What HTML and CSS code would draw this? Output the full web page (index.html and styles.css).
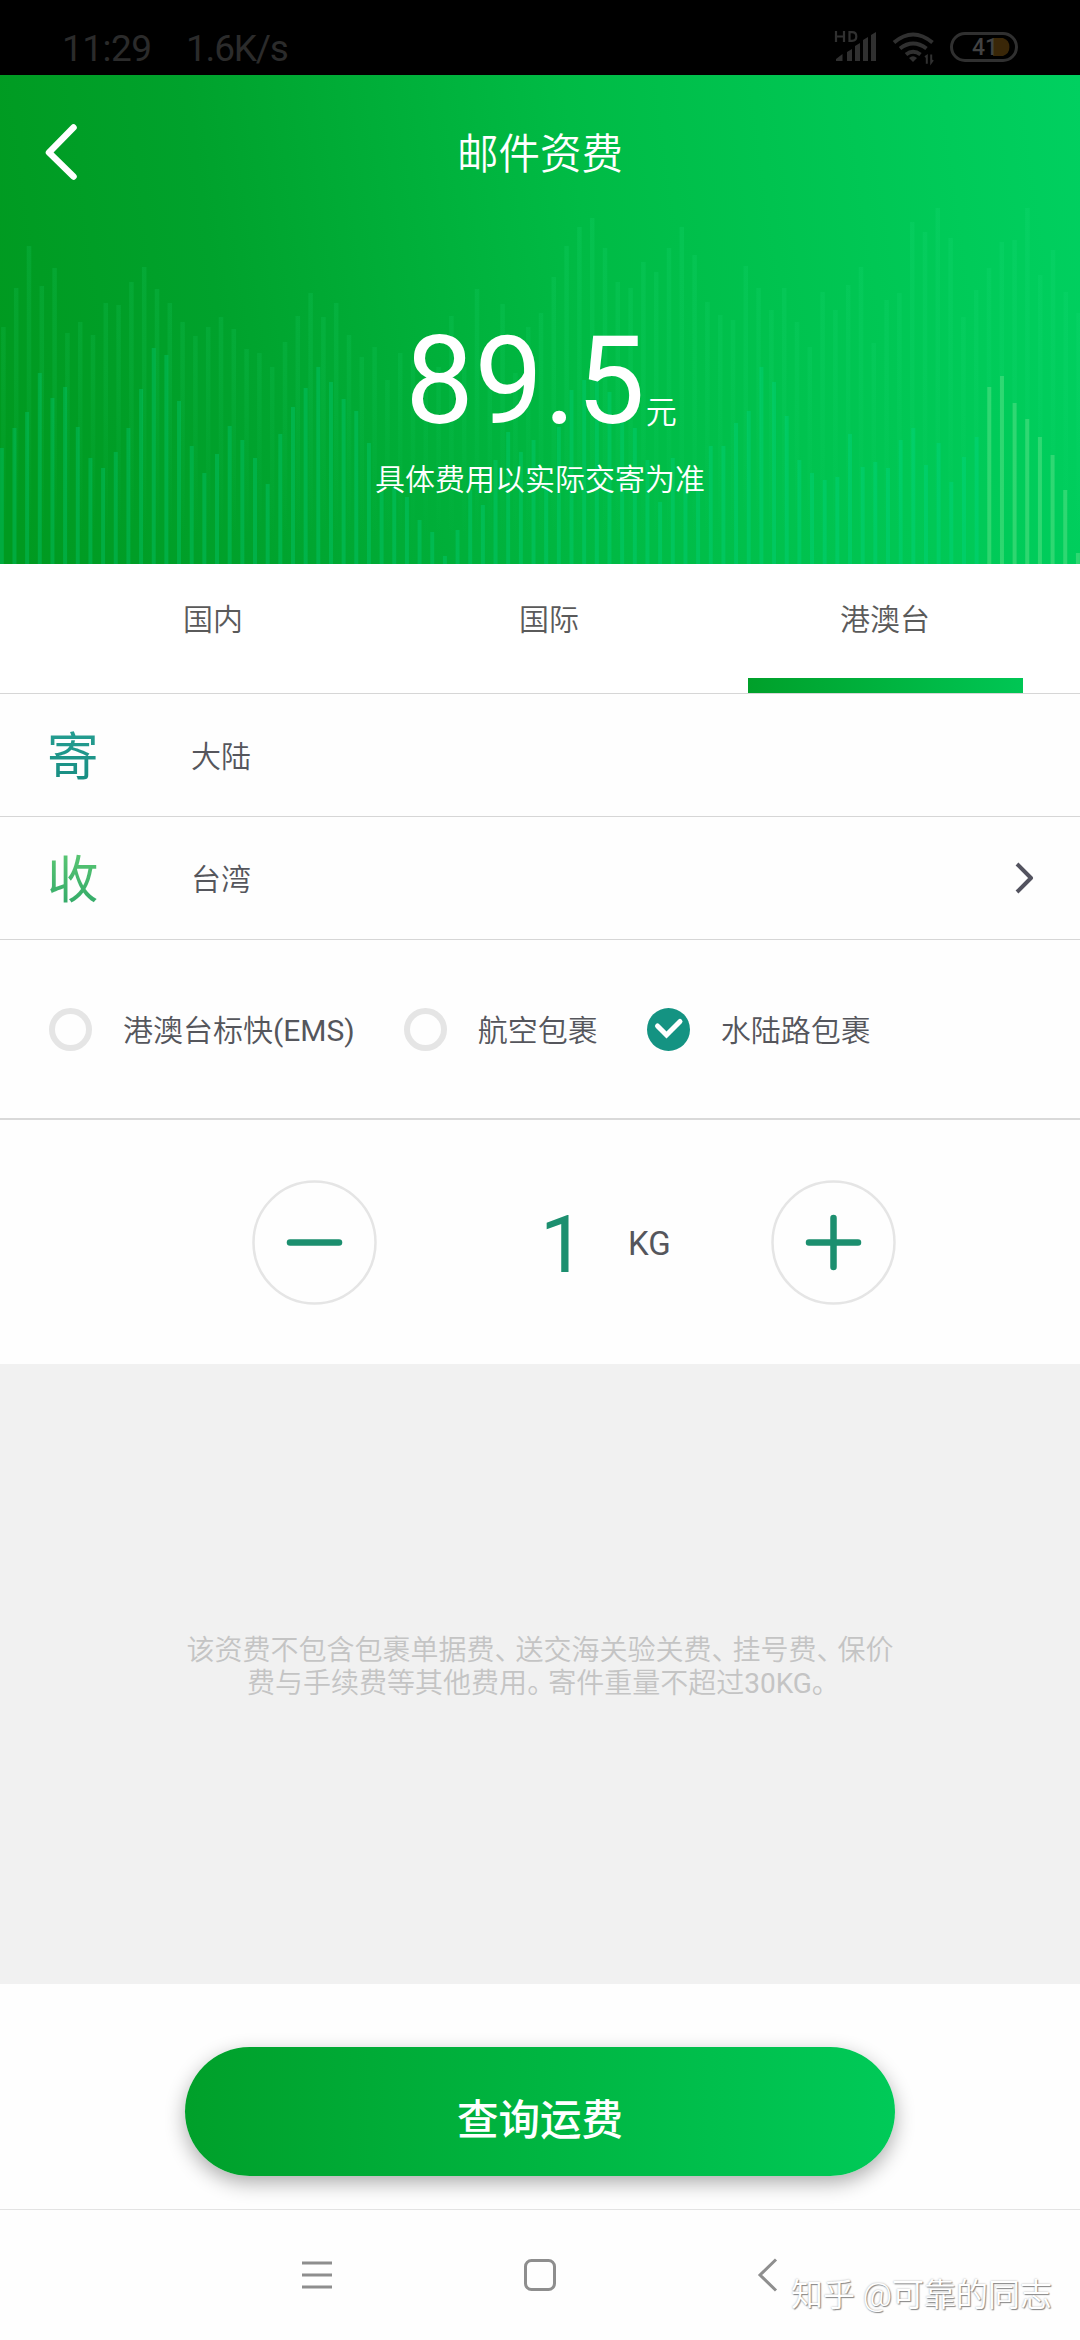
FILE: index.html
```html
<!DOCTYPE html>
<html lang="zh-CN">
<head>
<meta charset="utf-8">
<title>邮件资费</title>
<link rel="stylesheet" href="styles.css">
</head>
<body>
<div class="statusbar">
  <span class="clock">11:29</span>
  <span class="speed">1.6K/s</span>
  <svg class="status-icons" width="190" height="40" viewBox="830 26 190 40">
    <g fill="none" stroke="#303030" stroke-width="2.2"><path d="M835 31v11M843 31v11M835 36.500h8M848.500 32.200v8.600h2.500q4.300 0 4.300-4.300t-4.300-4.300z"/></g>
    <g fill="#303030"><path d="M835 61v-2l6.500-5v7zM846 61v-9l5-3v12zM854 61v-15l5-3v18zM862 61v-21l5-3v24zM870 61v-26l5-3v29z"/><path d="M912 62l-4-4q4-3.500 8 0z"/></g>
    <g fill="none" stroke="#303030" stroke-width="4"><path d="M893 42.500q19-16 38.500 0M899 48.500q13-10 26.500 0M905 54.500q7-5.500 14.500 0"/><path stroke-width="2" d="M924 57l1.800-1.200v8M932 60l-1.800 2.500v-8"/></g>
    <rect x="950.500" y="33.500" width="65" height="27" rx="13.500" fill="none" stroke="#303030" stroke-width="3"/>
    <path d="M992 38h10a9.500 9.500 0 0 1 0 18h-10z" fill="#3a2708"/>
    <text x="971" y="55" class="battery-text">41</text>
  </svg>
</div>
<header class="hero">
  <svg class="hero-bars" id="bars" width="1080" height="489" viewBox="0 75 1080 489">
    <defs>
      <linearGradient id="fade" gradientUnits="userSpaceOnUse" x1="0" y1="200" x2="0" y2="540"><stop offset="0" stop-color="#20df80" stop-opacity=".17"/><stop offset=".5" stop-color="#20df80" stop-opacity=".12"/><stop offset="1" stop-color="#20df80" stop-opacity="0"/></linearGradient>
    </defs>
  </svg>
  <div class="titlebar">
    <svg class="back" width="36" height="60" viewBox="0 0 36 60"><path d="M30.500 5.500L6 30.500l24.500 24" fill="none" stroke="#fff" stroke-width="6.500" stroke-linecap="round" stroke-linejoin="round"/></svg>
    <h1 class="title">邮件资费</h1>
  </div>
  <div class="price"><span class="amount">89.5</span><span class="unit">元</span></div>
  <p class="hint">具体费用以实际交寄为准</p>
</header>
<nav class="tabs">
  <div class="tab">国内</div>
  <div class="tab">国际</div>
  <div class="tab active">港澳台</div>
</nav>
<div class="row"><span class="mark send">寄</span><span class="place">大陆</span></div>
<div class="row"><span class="mark receive">收</span><span class="place">台湾</span>
  <svg class="chevron" width="22" height="34" viewBox="0 0 22 34"><path d="M3 3l14 14L3 31" fill="none" stroke="#53535f" stroke-width="4" stroke-linejoin="round"/></svg>
</div>
<div class="options">
  <div class="option"><i class="radio"></i><span class="label">港澳台标快<span class="latin">(EMS)</span></span></div>
  <div class="option"><i class="radio"></i><span class="label">航空包裹</span></div>
  <div class="option"><svg width="43" height="43" viewBox="0 0 43 43"><circle cx="21.500" cy="21.500" r="21.500" fill="#149382"/><path d="M10.500 18l9 9L33 13.500" fill="none" stroke="#fff" stroke-width="5" stroke-linecap="round"/></svg><span class="label">水陆路包裹</span></div>
</div>
<div class="stepper">
  <svg width="125" height="125" viewBox="0 0 125 125"><circle cx="62.500" cy="62.500" r="61" class="ring"/><path d="M38 62.500h49" class="sign"/></svg>
  <span class="weight">1</span><span class="kg">KG</span>
  <svg width="125" height="125" viewBox="0 0 125 125"><circle cx="62.500" cy="62.500" r="61" class="ring"/><path d="M38 62.500h49M62.500 38v49" class="sign"/></svg>
</div>
<main class="note">
  <p>该资费不包含包裹单据费<b>、</b>送交海关验关费<b>、</b>挂号费<b>、</b>保价<br>费与手续费等其他费用<b>。</b>寄件重量不超过<span class="latin">30KG</span><b>。</b></p>
</main>
<div class="action"><button class="submit">查询运费</button></div>
<footer class="navbar">
  <svg width="32" height="34" viewBox="0 0 32 34"><path d="M1 5h30M1 17h30M1 29h30" class="key"/></svg>
  <svg width="34" height="34" viewBox="0 0 34 34"><rect x="2.500" y="2.500" width="29" height="29" rx="6" class="key"/></svg>
  <svg width="22" height="34" viewBox="0 0 22 34"><path d="M19 1.500L3 17l16 15.500" class="key"/></svg>
  <span class="watermark">知乎 @可靠的同志</span>
</footer>
<script src="bars.js"></script>
</body>
</html>
```
FILE: bars.js
```js
// Bar tops in page pixels; bars all stand on the lower edge of the header.
var rear = [327,288,246,286,268,333,322,335,303,305,282,267,289,303,322,336,327,317,329,349,353,367,342,316,293,317,303,335,357,347,380,353,360,380,367,316,367,289,370,304,373,327,313,277,246,227,218,248,282,288,262,272,248,227,255,302,315,320,266,288,310,288,322,347,292,310,285,267,343,300,293,222,232,208,238,317,290,268,242,240,208,275,250,292,313];
var front = [448,428,412,373,398,387,427,458,468,452,428,389,348,355,401,446,473,454,426,440,458,484,434,407,388,367,382,399,411,443,480,487,497,520,532,556,530,490,505,460,432,452,440,480,427,390,380,367,392,410,428,460,502,458,480,480,446,446,423,411,367,382,416,460,473,480,477,434,467,462,468,440,428,465,443,482,457,437,387,376,403,419,437,455,490,553];
var svg = document.getElementById('bars');
function draw(tops, start, step, width, name) {
  tops.forEach(function (top, i) {
    var r = document.createElementNS('http://www.w3.org/2000/svg', 'rect');
    r.setAttribute('x', start + i * step - width / 2);
    r.setAttribute('y', top);
    r.setAttribute('width', width);
    r.setAttribute('height', 564 - top);
    r.setAttribute('class', name + (name === 'front' && i > 77 ? ' bright' : ''));
    svg.appendChild(r);
  });
}
draw(rear, 3.4, 12.8, 4.5, 'rear');
draw(front, 1.8, 12.66, 4, 'front');
```
FILE: styles.css
```css
* { box-sizing: border-box; }
body { margin: 0; width: 1080px; height: 2340px; background: #fefefe; color: #55565c; font: 350 30px/1.2 Roboto, "Noto Sans CJK SC", sans-serif; display: flex; flex-direction: column; overflow: hidden; }
svg { display: block; flex: none; }
h1, p { margin: 0; font-weight: 350; }
.latin { font-weight: 400; }

.statusbar { height: 75px; flex: none; background: #000; color: #2b2b2b; display: flex; align-items: flex-start; padding: 24px 59px 0 62px; font-weight: 400; font-size: 37px; line-height: 50px; }
.status-icons { margin-top: 2px; }
.clock { width: 124px; letter-spacing: -.5px; }
.speed { flex: 1; letter-spacing: -1.2px; }
.battery-text { font: 500 23px Roboto, sans-serif; fill: #424242; }

.hero { position: relative; flex: none; height: 489px; background: linear-gradient(82deg, #009a20 2%, #00a22c 22%, #00bb45 55%, #00cb59 88%, #00d060); color: #fff; text-align: center; display: flex; flex-direction: column; }
.hero-bars { position: absolute; inset: 0; }
.rear { fill: url(#fade); }
.front { fill: rgba(0, 225, 155, .25); }
.front.bright { fill: rgba(120, 235, 150, .38); }
.titlebar { position: relative; display: grid; grid-template-columns: 120px 1fr 120px; align-items: center; height: 154px; }
.back { margin-left: 43px; }
.title { font-size: 41.5px; line-height: 60px; padding-top: 5px; }
.price { position: relative; height: 212px; padding: 83px 0 0 2px; display: flex; justify-content: center; align-items: baseline; line-height: 140px; }
.amount { font-size: 122px; font-weight: 400; letter-spacing: .6px; }
.unit { font-size: 31px; }
.hint { position: relative; padding-top: 19px; line-height: 40px; }

.tabs { flex: none; height: 130px; padding: 0 27px 0 45px; border-bottom: 1px solid #d6d6d6; display: flex; background: #fff; }
.tab { width: 336px; flex: none; display: flex; flex-direction: column; align-items: center; padding-top: 38px; color: #5a5a5a; justify-content: space-between; }
.active::after { content: ""; width: 275px; height: 15px; background: linear-gradient(90deg, #00a02a, #00c654); }

.row { flex: none; height: 123px; border-bottom: 1px solid #d6d6d6; display: flex; align-items: center; padding: 0 44px 0 47px; }
.mark { width: 144px; padding-top: 6px; font-size: 51.5px; line-height: 60px; font-weight: 400; -webkit-background-clip: text; background-clip: text; color: transparent; }
.send { background-image: linear-gradient(#27a093, #168b80); }
.receive { background-image: linear-gradient(#5fca74, #2fa768); }
.place { flex: 1; padding-top: 4px; }

.options { flex: none; height: 180px; border-bottom: 2px solid #d9d9d9; display: flex; align-items: center; padding-left: 49px; gap: 49px; }
.option { display: flex; align-items: center; gap: 31px; white-space: nowrap; }
.label { padding-top: 4px; }
.radio { width: 43px; height: 43px; border: 6px solid #e5e5e5; border-radius: 50%; }

.stepper { flex: none; height: 244px; display: flex; align-items: center; padding-left: 252px; }
.ring { fill: none; stroke: #e5e5e5; stroke-width: 2.5; }
.sign { stroke: #1c8f6f; stroke-width: 6.5; stroke-linecap: round; }
.weight { margin-left: 163px; width: 88px; padding-top: 5px; font-size: 80px; line-height: 90px; font-weight: 400; color: #1c8f6f; }
.kg { width: 143px; padding-top: 3px; font-size: 33px; font-weight: 400; }

.note { flex: none; height: 620px; padding-bottom: 14px; background: #f1f1f1; color: #c4c4c4; display: flex; align-items: center; justify-content: center; text-align: center; font-size: 28px; line-height: 33px; }
.note b { font-weight: 350; font-feature-settings: "halt"; margin-right: 7px; }

.action { flex: none; height: 226px; padding-top: 63px; border-bottom: 1px solid #e3e3e3; display: flex; justify-content: center; align-items: flex-start; }
.submit { width: 710px; height: 129px; padding: 18px 0 0; border: 0; border-radius: 65px; background: linear-gradient(90deg, #00a02a, #00ca58); box-shadow: 0 7px 20px rgba(0, 0, 0, .32); color: #fff; font: 500 41.5px/60px Roboto, "Noto Sans CJK SC", sans-serif; }

.navbar { flex: 1; display: flex; align-items: flex-start; padding: 48px 0 0 301px; }
.navbar svg + svg { margin-left: 190px; }
.navbar svg:nth-of-type(3) { margin-left: 200px; }
.key { fill: none; stroke: #8e8e8e; stroke-width: 3; }
.watermark { margin: 17px 0 0 12px; font-size: 32px; line-height: 40px; font-weight: 350; color: #fff; text-shadow: 1px 1px 1px #888, 0 0 2px #aaa; white-space: nowrap; }
```
